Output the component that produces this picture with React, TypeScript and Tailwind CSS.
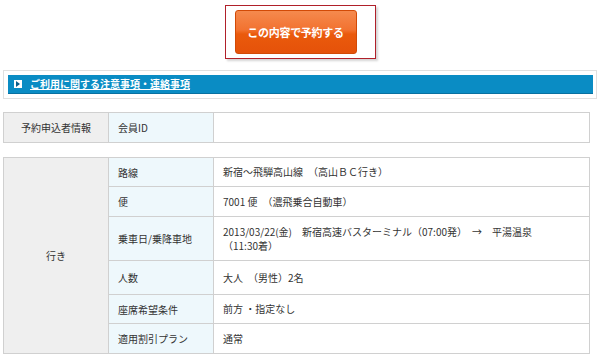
import React from 'react';

const font = { fontFamily: '"Meiryo", "Noto Sans CJK JP", "Liberation Sans", sans-serif' };

type Row = { label: string; value: React.ReactNode; h: string };

const rows: Row[] = [
  { label: '路線', value: '新宿〜飛騨高山線　（高山ＢＣ行き）', h: 'h-[29px]' },
  { label: '便', value: '7001 便　（濃飛乗合自動車）', h: 'h-[30px]' },
  {
    label: '乗車日/乗降車地',
    value: (
      <>
        2013/03/22(金)　新宿高速バスターミナル（07:00発）　→　平湯温泉
        <br />
        （11:30着）
      </>
    ),
    h: 'h-[44px]',
  },
  { label: '人数', value: '大人　（男性）2名', h: 'h-[34px]' },
  { label: '座席希望条件', value: '前方 ・指定なし', h: 'h-[29px]' },
  { label: '適用割引プラン', value: '通常', h: 'h-[30px]' },
];

export default function App() {
  return (
    <div className="w-[600px] h-[362px] bg-white text-[#333] overflow-hidden" style={font}>
      {/* Submit button */}
      <div className="flex justify-center pt-[5px]">
        <div className="w-[151px] h-[54px] border border-[#b0202a] p-[4px_0_0_9px] shadow-[2px_2px_2px_#d5d5d5]">
          <button className="w-[122px] h-[44px] rounded-[3px] border border-[#d24a06] bg-[linear-gradient(#f58a4e_0%,#f27230_45%,#ea5a0c_55%,#e5520a_100%)] text-white text-[11px] font-bold tracking-tight">
            この内容で予約する
          </button>
        </div>
      </div>

      {/* Notice bar */}
      <div className="mx-[3px] mt-[11px] border border-[#e0e0e0] p-[4px] pr-[3px]">
        <div className="h-[19px] bg-[#0a8cc4] border-b border-[#0870a0] flex items-center pl-[6px]">
          <span className="w-[8px] h-[8px] bg-white flex items-center justify-center">
            <svg width="4" height="6" viewBox="0 0 4 6">
              <path d="M0 0 L4 3 L0 6 Z" fill="#0a5d8a" />
            </svg>
          </span>
          <span className="ml-[8px] text-[10px] font-bold text-white underline leading-none">
            ご利用に関する注意事項・連絡事項
          </span>
        </div>
      </div>

      {/* Applicant info */}
      <table className="mx-[3px] mt-[13px] w-[587px] border-collapse text-[10px]">
        <tbody>
          <tr className="h-[30px]">
            <td className="w-[105px] border border-[#d0d0d0] bg-[#efefef] text-center">予約申込者情報</td>
            <td className="w-[105px] border border-[#d0d0d0] bg-[#eef8fc] px-[9px]">会員ID</td>
            <td className="border border-[#d0d0d0] bg-white"></td>
          </tr>
        </tbody>
      </table>

      {/* Outbound trip */}
      <table className="mx-[3px] mt-[14px] w-[587px] border-collapse text-[10px]">
        <tbody>
          {rows.map((r, i) => (
            <tr key={r.label} className={r.h}>
              {i === 0 && (
                <td
                  rowSpan={rows.length}
                  className="w-[105px] border border-[#d0d0d0] bg-[#efefef] text-center align-middle"
                >
                  行き
                </td>
              )}
              <td className="w-[105px] border border-[#d0d0d0] bg-[#eef8fc] px-[9px]">{r.label}</td>
              <td className="border border-[#d0d0d0] bg-white px-[9px] leading-[14px]">{r.value}</td>
            </tr>
          ))}
        </tbody>
      </table>
    </div>
  );
}
